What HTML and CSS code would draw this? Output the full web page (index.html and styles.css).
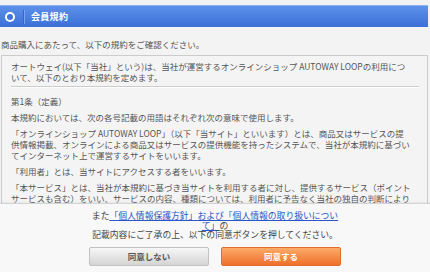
FILE: index.html
```html
<!DOCTYPE html>
<html lang="ja">

<head>
  <meta charset="utf-8">
  <meta name="viewport" content="width=device-width, initial-scale=1">
  <title>会員規約</title>
  <link rel="stylesheet" href="styles.css">
</head>

<body>
  <header class="page-header">
    <span class="header-icon"></span>
    <span class="header-sep"></span>
    <h1>会員規約</h1>
  </header>

  <p class="intro">商品購入にあたって、以下の規約をご確認ください。</p>

  <section class="terms-box">
    <p>オートウェイ(以下「当社」という)は、当社が運営するオンラインショップ AUTOWAY LOOPの利用について、以下のとおり本規約を定めます。</p>
    <hr>
    <p>第1条（定義）</p>
    <p>本規約においては、次の各号記載の用語はそれぞれ次の意味で使用します。</p>
    <p>「オンラインショップ AUTOWAY LOOP」（以下「当サイト」といいます）とは、商品又はサービスの提供情報掲載、オンラインによる商品又はサービスの提供機能を持ったシステムで、当社が本規約に基づいてインターネット上で運営するサイトをいいます。</p>
    <p>「利用者」とは、当サイトにアクセスする者をいいます。</p>
    <p>「本サービス」とは、当社が本規約に基づき当サイトを利用する者に対し、提供するサービス（ポイントサービスも含む）をいい、サービスの内容、種類については、利用者に予告なく当社の独自の判断により随時変更、削除を行うことができます。当サイト上での表示、又は電子メールその他の通信手段を通じて告知します。</p>
  </section>

  <footer class="agree-area">
    <p class="agree-text">また<a href="#">「個人情報保護方針」および「個人情報の取り扱いについ<br>て」</a>の<br>記載内容にご了承の上、以下の同意ボタンを押してください。</p>
    <div class="agree-buttons">
      <button class="btn btn-decline">同意しない</button>
      <button class="btn btn-accept">同意する</button>
    </div>
  </footer>
</body>

</html>
```

FILE: styles.css
```css
body {
  margin: 0;
  font-family: "Noto Sans CJK JP", "Noto Sans", sans-serif;
  font-size: 8.5px;
  color: #555;
  background-color: #f3f3f3;
}
.page-header {
  display: flex;
  align-items: center;
  height: 21px;
  margin: 5px 2px 0 0;
  border-top: 1px solid #8db2f1;
  background: linear-gradient(#5c91ea, #3c6fd8);
}
.header-icon {
  width: 6px;
  height: 6px;
  margin-left: 5px;
  border: 2px solid #fff;
  border-radius: 50%;
  background-color: #3f74dc;
}
.header-sep {
  width: 1px;
  height: 14px;
  margin-left: 9px;
  background-color: #7ea3ea;
  box-shadow: -1px 0 0 #3565cc;
}
.page-header h1 {
  margin: 0 0 0 6px;
  font-size: 9px;
  font-weight: bold;
  color: #fff;
  letter-spacing: 0.3px;
}
.intro {
  margin: 12px 0 5px 1px;
  line-height: 11px;
}
.terms-box {
  height: 142px;
  margin: 0 2px 0 1px;
  padding: 5px 16px 0 9px;
  border: 1px solid #ccc;
  border-bottom: none;
  background-color: #f4f4f4;
  overflow: hidden;
}
.terms-box p {
  margin: 0 0 5px;
  line-height: 11px;
}
.terms-box hr {
  margin: -2px -8px 8px 0;
  border: 0;
  border-top: 1px solid #ccc;
  border-bottom: 1px solid #fff;
}
.agree-area {
  height: 68px;
  border-top: 1px solid #d4d4d4;
  background-color: #f8f8f8;
  box-shadow: 0 -1px 2px rgba(0, 0, 0, 0.06);
}
.agree-text {
  margin: 0;
  padding-top: 7px;
  font-size: 8.8px;
  line-height: 9.5px;
  text-align: center;
  color: #444;
}
.agree-text a {
  color: #2b56c9;
}
.agree-buttons {
  display: flex;
  justify-content: center;
  gap: 12px;
  margin-top: 7px;
}
.btn {
  width: 120px;
  height: 19px;
  padding: 0;
  border-radius: 2px;
  font-family: inherit;
  font-size: 8.5px;
  font-weight: bold;
}
.btn-decline {
  border: 1px solid #c2c2c2;
  background: linear-gradient(#f7f7f7, #d4d4d4);
  color: #555;
}
.btn-accept {
  border: 1px solid #e36c2c;
  background: linear-gradient(#fcab68, #ef702c);
  color: #fff;
}
```
